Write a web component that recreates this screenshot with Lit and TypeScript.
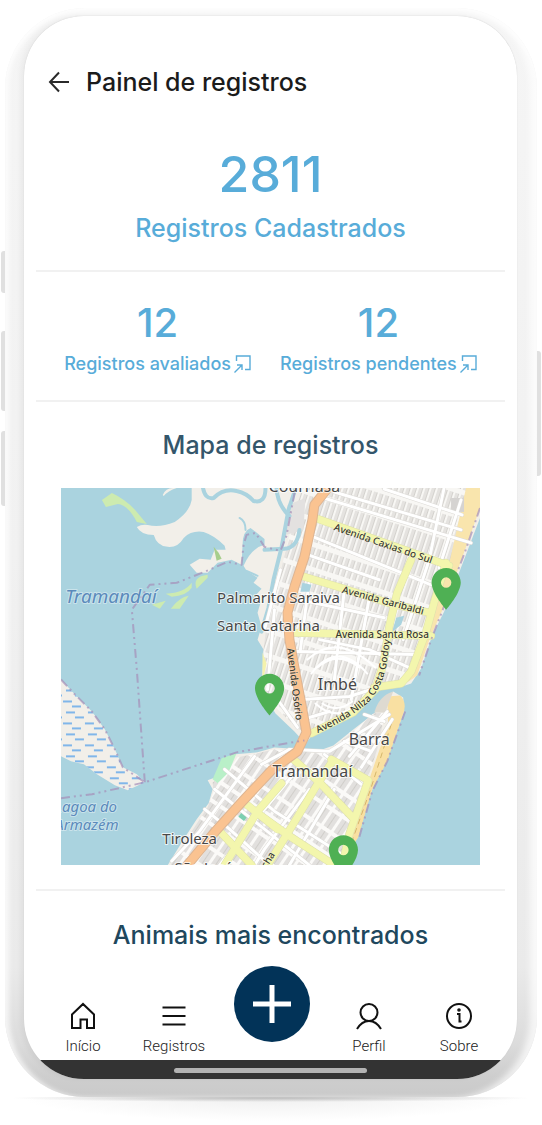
import { LitElement, html, svg, css } from "lit";
import { customElement } from "lit/decorators.js";

interface Label {
  text: string;
  x: number;
  y: number;
  size: number;
  kind: string;
  rotate?: number;
}

const labels: Label[] = [
  { text: "Cournasa", x: 305, y: 492, size: 16, kind: "place" },
  { text: "Palmarito Saraiva", x: 279, y: 603, size: 15, kind: "place" },
  { text: "Santa Catarina", x: 269, y: 631, size: 15, kind: "place" },
  { text: "Imbé", x: 338, y: 691, size: 16, kind: "place" },
  { text: "Barra", x: 370, y: 746, size: 16, kind: "place" },
  { text: "Tramandaí", x: 313, y: 778, size: 16, kind: "place" },
  { text: "Tiroleza", x: 190, y: 845, size: 15, kind: "place" },
  { text: "São José", x: 204, y: 874, size: 15, kind: "place" },
  { text: "Tramandaí", x: 111, y: 603, size: 19, kind: "water" },
  { text: "Lagoa do", x: 86, y: 813, size: 15, kind: "water" },
  { text: "Armazém", x: 87, y: 831, size: 15, kind: "water" },
  { text: "Avenida Caxias do Sul", x: 383, y: 547, size: 10, kind: "street", rotate: 19 },
  { text: "Avenida Garibaldi", x: 383, y: 604, size: 10, kind: "street", rotate: 15 },
  { text: "Avenida Santa Rosa", x: 383, y: 638, size: 10, kind: "street" },
  { text: "Avenida Osório", x: 292, y: 685, size: 10, kind: "street", rotate: 83 },
  { text: "Rocha", x: 268, y: 868, size: 10, kind: "street", rotate: -58 },
];

const northStreets = [
  "M321 497L472 543", "M335 492L462 530", "M385 489L463 515", "M314 537L432 585", "M303 553L380 580",
  "M300 600L385 618", "M297 652L415 655",
  "M445 488L430 560L404 640", "M462 500L440 568", "M345 590L335 680", "M370 598L352 700",
  "M310 580L301 650", "M275 610L268 690", "M281 570L265 630", "M320 640L370 650L410 668",
  "M303 700L350 697L372 690", "M310 718L330 712", "M278 700L298 728",
];

const southStreets = [
  "M262 765L290 750L330 752L390 715", "M325 755L362 785", "M345 742L372 752",
  "M365 715L385 722", "M350 757L388 712", "M362 768L393 720",
  "M225 770L275 812L350 860", "M215 790L265 830L310 866", "M205 810L230 830L270 866",
  "M255 757L200 832L172 862", "M300 768L250 828L220 866",
  "M310 790L265 850L255 866", "M335 790L290 866",
];

@customElement("record-map")
export class RecordMap extends LitElement {
  static styles = css`
    :host { display: block; }
    svg { display: block; width: 100%; height: auto; }
    text { font-family: "Noto Sans", "Open Sans", sans-serif; text-anchor: middle; paint-order: stroke; stroke-linejoin: round; }
    .place { fill: #484848; stroke: rgba(255, 255, 255, 0.75); stroke-width: 2px; }
    .water { fill: #5b8abb; stroke: rgba(255, 255, 255, 0.4); stroke-width: 2px; font-style: italic; }
    .street { fill: #3b3b30; stroke: rgba(255, 255, 255, 0.4); stroke-width: 1px; font-weight: 500; }
    .line { fill: none; stroke-linejoin: round; stroke-linecap: round; }
    .land { fill: #f2efe9; }
    .minor { stroke: #ffffff; stroke-width: 3; }
    .casing { stroke: #dcdad6; stroke-width: 4; }
    .yellow { stroke: #f3f6ad; stroke-width: 7; }
    .yellow-edge { stroke: #dde0ac; stroke-width: 8; }
    .orange { stroke: #fac391; stroke-width: 8; }
    .orange-edge { stroke: #deb592; stroke-width: 10; }
    .stream { stroke: #aad3df; }
    .border { stroke: #a58fb8; stroke-width: 2; stroke-dasharray: 9 4 2 4 2 4; opacity: 0.7; stroke-linecap: butt; }
    .pin { fill: #4fb054; fill-rule: evenodd; }
  `;

  private road(d: string, cls: string) {
    return svg`<path class="line ${cls}" d=${d}></path>`;
  }

  private pin(x: number, y: number) {
    return svg`<path class="pin" transform="translate(${x - 25} ${y - 46}) scale(2.09)"
      d="M12 2C8.13 2 5 5.13 5 9c0 5.25 7 13 7 13s7-7.75 7-13c0-3.87-3.13-7-7-7zm0 4.5a2.5 2.5 0 1 1 0 5 2.5 2.5 0 0 1 0-5z"></path>`;
  }

  render() {
    const yellow = [
      "M316 518L450 566", "M305 577L345 589L392 604L430 613", "M293 633L432 636",
      "M412 560L398 593L390 627L384 665L376 690L354 713L312 734",
      "M447 563L435 603L427 632L412 672L402 684L375 688",
      "M294 760L320 783L353 818", "M332 760L369 781L350 835L343 866",
      "M333 762L318 785L287 836L268 866", "M258 814L290 837L335 866",
      "M282 784L258 812L225 866", "M243 802L278 830", "M220 832L252 866",
    ];
    const orange = [
      "M327 490L315 505L313 520L305 557L295 587L288 613L290 640L297 679L302 705L307 733L298 752L272 771L242 803L215 833L186 868",
    ];
    return html`<svg viewBox="61 488 420 378" role="img" aria-label="Mapa de registros">
      <defs>
        <pattern id="rows" width="6" height="24" patternUnits="userSpaceOnUse" patternTransform="translate(314 520) rotate(18)">
          <rect width="6" height="24" fill="#f8f7f4"></rect>
          <rect x="1" y="2" width="4" height="19" fill="#e5e3e0"></rect>
          <rect x="4" y="2" width="1" height="19" fill="#d4d2ce"></rect>
        </pattern>
        <pattern id="blocks" width="12" height="20" patternUnits="userSpaceOnUse" patternTransform="translate(294 760) rotate(34)">
          <rect width="12" height="20" fill="#fbfaf8"></rect>
          <rect x="2" y="2" width="9" height="16" fill="#e2e0de"></rect>
          <rect x="6" y="2" width="1" height="16" fill="#d0ceca"></rect>
        </pattern>
        <pattern id="marsh" width="22" height="22" patternUnits="userSpaceOnUse" patternTransform="translate(62 700)">
          <path d="M1 2h9M10 7h9M4 13h9M13 18h9" stroke="#5aa3ea" stroke-width="1.5"></path>
        </pattern>
      </defs>

      <rect x="61" y="488" width="420" height="378" fill="#aad3df"></rect>

      <path class="land" d="M192 488L192 500Q190 512 175 522Q160 528 148 525Q142 524 137 527Q141 535 154 535Q157 546 168 547Q178 548 184 538Q192 530 204 532Q216 536 225 546L226 550L215 550L211 560L200 559L190 565L197 573L208 573L218 563L232 560L242 565L243 545Q243 531 251 528L265 539V545Q252 548 244 566L247 571L258 578L254 583L262 589L255 597L261 603L258 613L262 627L258 640L264 650L262 690L276 714L295 732L306 744L316 732L337 722L358 711L372 697L385 688L400 688L412 684L422 669L433 636L445 612L465 560L481 518V488Z"></path>
      <path d="M303 488L296 510L284 560L276 595L267 626L264 650L265 695L282 714L300 730L312 732L352 713L378 688L400 685L412 668L437 602L478 488Z" fill="url(#rows)"></path>
      <path class="land" d="M302 750L275 748L258 753L236 755L224 775L208 781L213 790L209 804L197 820L184 840L168 866H345L356 837L375 785L388 757L405 712L404 698L394 692L386 699L376 713L354 730L334 746L318 752Z"></path>
      <path d="M300 752L275 750L258 754L238 758L223 778L213 783L214 792L208 808L198 823L184 844L171 866H342L355 820L378 750L386 713L374 714L354 732L334 748L318 754Z" fill="url(#blocks)"></path>

      <path d="M288 505L306 498L304 530L286 535Z" fill="#e3e1e0"></path>
      <path d="M467 488H481V508L466 550L447 602L431 638L418 676L408 683L430 620L451 560Z" fill="#f9e5ad"></path>
      <path d="M401 696Q409 704 403 717L388 762L373 790L359 838L350 852L354 825L370 780L389 725L388 697Z" fill="#f9e0a2"></path>
      <path class="line" d="M392 725L372 788L352 844" stroke="#d4b66a" stroke-width="1" stroke-dasharray="5 5"></path>
      <path d="M375 713Q380 696 394 692L386 713Z" fill="#dedad1"></path>
      <path d="M222 759L237 754L229 773L218 784L213 780Z" fill="#b9f0c8"></path>
      <rect x="240" y="814" width="7" height="6" fill="#7bcfb0" transform="rotate(36 243 817)"></rect>
      <rect x="452" y="498" width="13" height="14" fill="#d5d3d1"></rect>

      <path d="M102 500L112 493Q127 500 137 512L147 524L137 522Q128 505 118 504L106 507Z" fill="#cdebb0"></path>
      <path d="M208 575Q192 577 197 589L208 578ZM192 583Q185 593 166 594L172 597Q187 596 192 588ZM189 596Q180 597 171 609L180 609ZM152 605L166 601L160 609Z" fill="#cdebb0"></path>
      <path d="M214 547L219 553L222 559L217 561Z" fill="#a7ce8c"></path>
      <path d="M263 653L267 664L263 684Z" fill="#f4f2ad"></path>
      <path d="M163 495Q166 488 173 488H177Q168 491 164 496Z" class="land"></path>

      <path class="line stream" stroke-width="4" d="M203 486Q205 500 214 498Q224 488 237 491Q247 493 254 501Q266 504 266 488"></path>
      <path class="line stream" stroke-width="4" d="M277 488Q278 505 290 516M300 530Q298 548 285 549L265 550"></path>
      <path class="line stream" stroke-width="4" d="M297 486L289 510L282 548L274 580L269 608L262 632"></path>
      <path class="line stream" stroke-width="2" d="M246 530Q246 521 240 518M247 571L258 576"></path>

      <path class="land" d="M61 680L75 695L92 712L105 730L115 750L123 768L137 775L145 783L128 791L115 786L97 775L84 765L71 762L61 757Z"></path>
      <path d="M61 680L75 695L92 712L105 730L115 750L123 768L137 775L145 783L128 791L115 786L97 775L84 765L71 762L61 757Z" fill="url(#marsh)"></path>

      ${northStreets.map((d) => this.road(d, "casing"))}
      ${southStreets.map((d) => this.road(d, "casing"))}
      ${northStreets.map((d) => this.road(d, "minor"))}
      ${southStreets.map((d) => this.road(d, "minor"))}
      <g class="line" stroke="#ffffff" stroke-width="2">
        <path d="M318 668Q338 650 360 668M312 674Q338 640 368 674M323 704Q338 714 353 702M316 704Q338 724 360 703M308 660Q338 632 376 668"></path>
      </g>
      <path d="M303 583L312 585L310 592L301 592Z M397 618L405 616L402 625L393 632Z" fill="#aad3df"></path>
      ${yellow.map((d) => this.road(d, "yellow-edge"))}
      ${yellow.map((d) => this.road(d, "yellow"))}
      ${orange.map((d) => this.road(d, "orange-edge"))}
      ${orange.map((d) => this.road(d, "orange"))}

      <path class="line border" d="M145 783L141 727L137 670L132 610L150 585L177 583L205 572L228 562L242 565L244 545L247 535L256 533L265 547L281 551L287 536L296 488"></path>
      <path class="line border" d="M61 799L92 795L145 783L222 758L237 753L275 746L305 741"></path>
      <path class="line border" d="M61 680L75 695L92 712L105 730L115 750L123 768L145 783"></path>
      <path class="line border" d="M481 508L466 552L446 604L432 640L420 676"></path>
      <path class="line border" d="M406 712L388 762L373 792L360 838"></path>

      ${labels.map(
        (l) => svg`<text class=${l.kind} x=${l.x} y=${l.y} font-size=${l.size}
          transform=${l.rotate ? `rotate(${l.rotate} ${l.x} ${l.y})` : ""}>${l.text}</text>`,
      )}
      <path id="costa" fill="none" d="M318 734Q352 719 371 701Q384 684 387 667L391 640"></path>
      <text class="street" font-size="10"><textPath href="#costa" startOffset="50%">Avenida Nilza Costa Godoy</textPath></text>

      ${this.pin(447, 610)} ${this.pin(270, 716)} ${this.pin(344, 878)}
    </svg>`;
  }
}

const icon = {
  home: svg`<path d="M2 12.500 13 2l11 10.500V26H17V17.500H10.500V26H2Z"></path>`,
  list: svg`<path d="M1.500 5.500h23M1.500 14h23M1.500 22.500h23"></path>`,
  user: svg`<circle cx="13" cy="10.500" r="8.500"></circle><path d="M1 27C4 22 8 19 13 19s9 3 12 8"></path>`,
  info: svg`<circle cx="13" cy="14" r="12"></circle><path d="M11 12h2.500v7.500h2" stroke-width="2"></path><circle cx="13" cy="8" r="0.800"></circle>`,
};

@customElement("app-root")
export class AppRoot extends LitElement {
  static styles = css`
    :host { display: block; font-family: Inter, "Liberation Sans", sans-serif; background: #ffffff; }
    * { box-sizing: border-box; }
    .device { display: grid; grid-template-columns: 4px minmax(0, 1fr) 4px; padding: 8px 1px 0; }
    .keys { display: flex; flex-direction: column; gap: 20px; padding-top: 243px; }
    .keys.right { padding-top: 343px; }
    .key { height: 80px; background: #e0e0e0; border-radius: 3px 0 0 3px; }
    .key.short { height: 42px; margin-bottom: 18px; }
    .key.low { height: 75px; }
    .key.power { height: 125px; border-radius: 0 3px 3px 0; }
    .frame {
      padding: 8px 20px 18px 19px; border-radius: 80px;
      background: linear-gradient(#f5f5f5 0, #f1f1f1 50%, #eaeaea 88%, #dcdcdc 95%, #cecece 98%, #cacaca 100%);
      box-shadow: inset 0 7px 6px -3px rgba(255, 255, 255, 0.9), inset 6px 0 5px -2px rgba(255, 255, 255, 0.7),
        inset -9px 0 6px -2px rgba(255, 255, 255, 0.7), inset 0 0 0 1px rgba(0, 0, 0, 0.02);
    }
    .screen { display: flex; flex-direction: column; border-radius: 60px; overflow: hidden; background: #ffffff; box-shadow: 0 0 1px #c4c4c4, -4px 0 5px rgba(0, 0, 0, 0.04); }
    .floor { height: 28px; background: radial-gradient(48% 4px at 50% 1px, #bdbdbd, #ffffff00), radial-gradient(46% 24px at 50% 0, #efefef, #ffffff); }
    header { display: flex; align-items: center; gap: 16px; padding: 48px 24px 0; }
    .back { display: flex; padding: 0; border: 0; background: none; cursor: pointer; }
    h1, h2, p { margin: 0; font-weight: 500; }
    h1 { font-size: 25px; line-height: 36px; color: #1b1b1b; }
    h2 { font-size: 25px; line-height: 32px; text-align: center; color: #34566b; }
    .total { padding: 42px 0 24px; text-align: center; color: #58acd9; }
    .total .big { font-size: 50px; line-height: 64px; font-weight: 500; }
    .total .caption { font-size: 25px; line-height: 36px; padding-top: 4px; }
    section { margin: 0 12px; border-bottom: 2px solid #f1f1f1; }
    .pair { display: flex; justify-content: center; gap: 29px; padding: 26px 0 20px; }
    .stat { display: flex; flex-direction: column; align-items: center; color: #58acd9; text-decoration: none; font-weight: 500; }
    .num { font-size: 40px; line-height: 50px; font-weight: 500; }
    .name { display: flex; align-items: center; gap: 3px; font-size: 18px; line-height: 32px; }
    .map { padding: 27px 25px 24px; }
    record-map { margin-top: 27px; }
    .animals { padding: 28px 0 15px; border: 0; }
    .animals h2 { color: #20475d; }
    nav { display: grid; grid-template-columns: 92px 90px 1fr 90px 90px; padding: 0 13px; align-items: end; }
    .item { display: flex; flex-direction: column; align-items: center; gap: 6px; padding-bottom: 4px; color: #222222; text-decoration: none; font: 300 15px/20px Roboto, sans-serif; }
    .item svg { stroke: #111111; stroke-width: 2; fill: none; }
    .add { display: grid; place-items: center; justify-self: center; width: 76px; height: 76px; margin-bottom: 18px; padding: 0; border: 0; border-radius: 50%; background: #023358; cursor: pointer; }
    .system { display: flex; justify-content: center; padding: 8px 0 6px; background: #333333; }
    .handle { width: 39%; height: 5px; border-radius: 3px; background: #b3b3b3; }
  `;

  private stat(value: number, name: string) {
    return html`<a class="stat" href="#">
      <span class="num">${value}</span>
      <span class="name">${name}
        <svg width="17" height="18" viewBox="0 0 17 18" fill="none" stroke="#58acd9" stroke-width="1.4" aria-hidden="true">
          <path d="M2.500 6V1H16V14.500H11M0.500 17.500 8 10M3 10H8V15"></path>
        </svg>
      </span>
    </a>`;
  }

  private item(name: string, shape: unknown) {
    return html`<a class="item" href="#">
      <svg width="26" height="28" viewBox="0 0 26 28" aria-hidden="true">${shape}</svg>${name}
    </a>`;
  }

  render() {
    return html`<div class="device">
      <div class="keys"><div class="key short"></div><div class="key"></div><div class="key low"></div></div>
      <div class="frame">
        <div class="screen">
          <header>
            <button class="back" aria-label="Voltar">
              <svg width="22" height="22" viewBox="0 0 22 22" fill="none" stroke="#2a2a2a" stroke-width="2">
                <path d="M21 11H2M11 1.500 2 11l9 9.500"></path>
              </svg>
            </button>
            <h1>Painel de registros</h1>
          </header>
          <main>
            <section class="total">
              <p class="big">2811</p>
              <p class="caption">Registros Cadastrados</p>
            </section>
            <section class="pair">${this.stat(12, "Registros avaliados")}${this.stat(12, "Registros pendentes")}</section>
            <section class="map">
              <h2>Mapa de registros</h2>
              <record-map></record-map>
            </section>
            <section class="animals"><h2>Animais mais encontrados</h2></section>
          </main>
          <nav>
            ${this.item("Início", icon.home)}${this.item("Registros", icon.list)}
            <button class="add" aria-label="Adicionar registro">
              <svg width="38" height="38" viewBox="0 0 38 38" stroke="#ffffff" stroke-width="5"><path d="M19 0V38M0 19H38"></path></svg>
            </button>
            ${this.item("Perfil", icon.user)}${this.item("Sobre", icon.info)}
          </nav>
          <div class="system"><div class="handle"></div></div>
        </div>
      </div>
      <div class="keys right"><div class="key power"></div></div>
    </div>
    <div class="floor"></div>`;
  }
}
